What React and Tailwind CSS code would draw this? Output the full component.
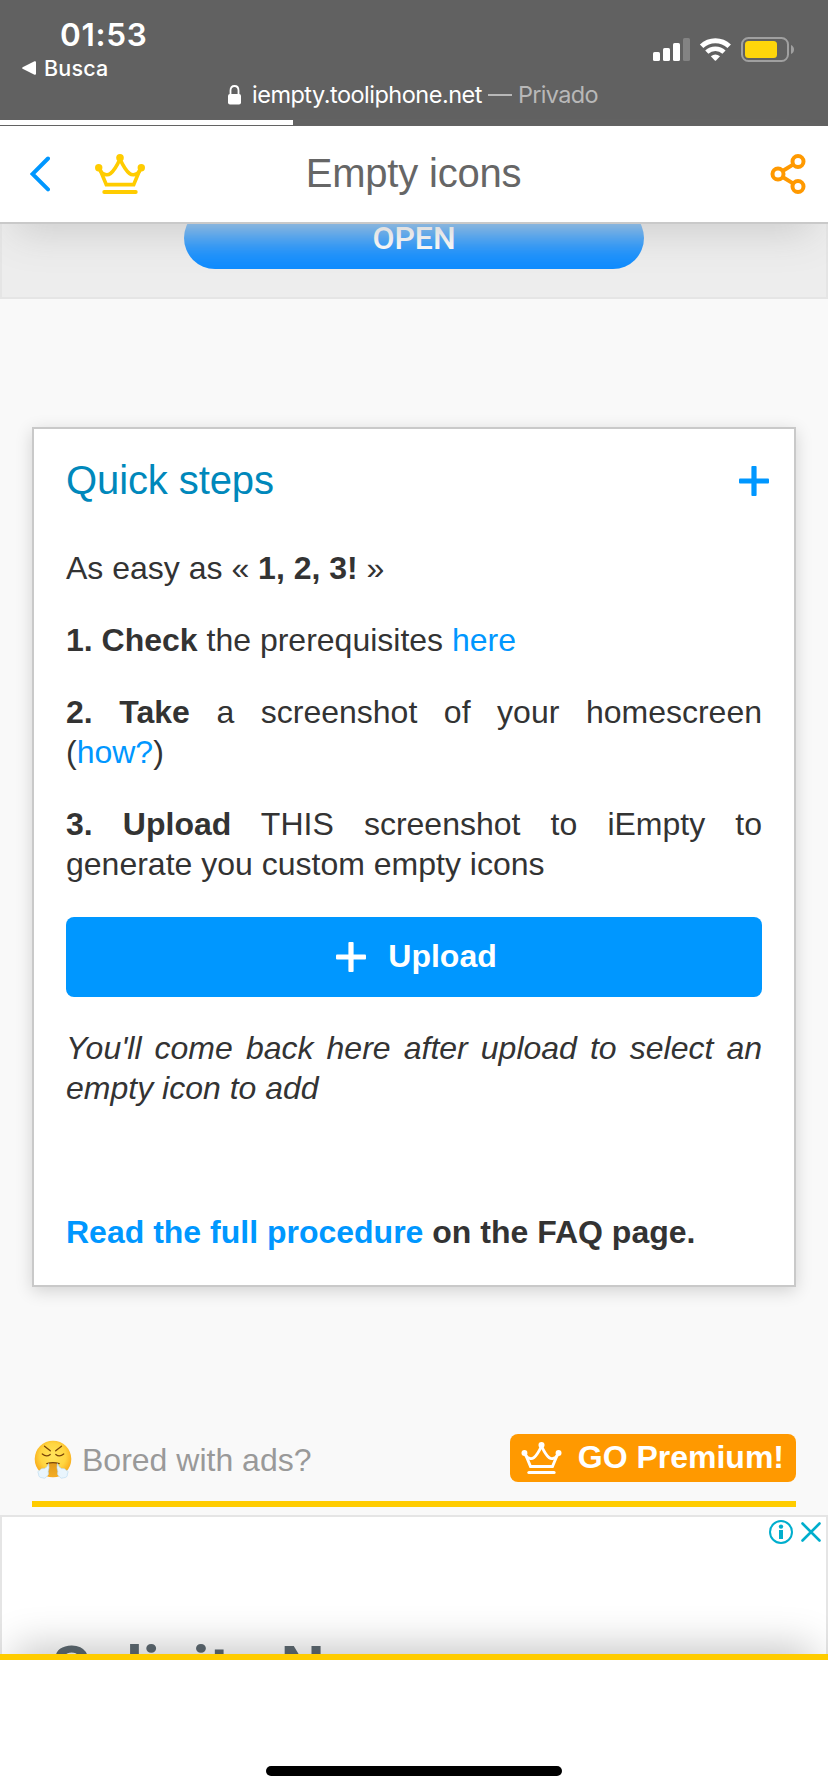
function Crown({ className }) {
  return (
    <svg className={className} viewBox="0 0 50 40" fill="none" stroke="currentColor" strokeWidth="3.6">
      <circle cx="3.7" cy="13.7" r="3.7" fill="currentColor" stroke="none" />
      <circle cx="25" cy="3.8" r="3.8" fill="currentColor" stroke="none" />
      <circle cx="46.3" cy="13.7" r="3.7" fill="currentColor" stroke="none" />
      <path d="M4.8 15 L11.3 30.6 H38.7 L45.2 15" />
      <path d="M5 16.5 C8 21 12.5 21.8 15.5 19.5 C19.3 16.5 22.3 11 25 5 C27.7 11 30.7 16.5 34.5 19.5 C37.5 21.8 42 21 45 16.5" />
      <path d="M9.2 38 H40.8" strokeLinecap="round" strokeWidth="3.8" />
    </svg>
  );
}

function Plus({ className }) {
  return (
    <svg className={className} viewBox="0 0 30 30" fill="currentColor">
      <rect x="0" y="12.4" width="30" height="5.2" rx="1" />
      <rect x="12.4" y="0" width="5.2" height="30" rx="1" />
    </svg>
  );
}

function HuffFace() {
  return (
    <svg className="h-[40px] w-[38px]" viewBox="0 0 38 40" fill="none">
      <defs>
        <radialGradient id="face" cx="50%" cy="42%" r="58%">
          <stop offset="0" stopColor="#ffe45c" />
          <stop offset="0.6" stopColor="#ffd540" />
          <stop offset="1" stopColor="#f8a414" />
        </radialGradient>
        <linearGradient id="mouth" x1="0" y1="0" x2="0" y2="1">
          <stop offset="0" stopColor="#e09a1c" />
          <stop offset="1" stopColor="#f4ac24" />
        </linearGradient>
      </defs>
      <circle cx="19" cy="19" r="18.3" fill="url(#face)" />
      <path d="M14.5 23 H23.5 L24.5 35.5 Q19 38 13.5 35.5 Z" fill="url(#mouth)" />
      <g stroke="#7a4508" strokeWidth="1.3" strokeLinecap="round">
        <path d="M10.5 6.2 Q13.5 8.5 16.3 10.8" />
        <path d="M27.5 6.2 Q24.5 8.5 21.7 10.8" />
        <path d="M8.3 14 Q12.5 17.6 16.2 14.4" />
        <path d="M29.7 14 Q25.5 17.6 21.8 14.4" />
        <path d="M12.8 23.6 Q19 21.6 25.2 23.6" />
      </g>
      <g fill="#e9f5fd" stroke="#b5d8f0" strokeWidth="0.6">
        <path d="M14.6 23.5 Q13.6 27 10.5 28.6 Q6.5 28 6 30.2 Q2.8 31 4.6 34 Q4.3 37.6 8.5 37.8 Q11 39.3 12.6 36.6 Q15.4 35 14.2 31.5 Q15.6 27.5 14.6 23.5 Z" />
        <path d="M23.4 23.5 Q24.4 27 27.5 28.6 Q31.5 28 32 30.2 Q35.2 31 33.4 34 Q33.7 37.6 29.5 37.8 Q27 39.3 25.4 36.6 Q22.6 35 23.8 31.5 Q22.4 27.5 23.4 23.5 Z" />
      </g>
    </svg>
  );
}

function StatusBar() {
  return (
    <div className="flex h-[126px] flex-col bg-[#616161] font-[Inter,sans-serif] text-white">
      <div className="flex h-[82px] justify-between">
        <div className="flex flex-col pt-[16px]">
          <span className="pl-[60px] text-[31.5px] leading-[38px] font-semibold tracking-[0.7px]">01:53</span>
          <span className="flex h-[28px] items-center gap-[8px] pl-[22px] text-[21.5px] leading-[28px] font-medium tracking-[0.2px]">
            <svg className="h-[14px] w-[14px]" viewBox="0 0 14 14" fill="white">
              <path d="M0.6 6.2 L12.5 0.3 Q14 0 14 1.2 V12.8 Q14 14 12.5 13.7 L0.6 7.8 Q-0.4 7 0.6 6.2 Z" />
            </svg>
            Busca
          </span>
        </div>
        <svg className="mt-[36px] mr-[32px] h-[28px] w-[144px]" viewBox="0 0 144 28" fill="none">
          <rect x="1" y="16" width="7" height="9" rx="1.6" fill="white" />
          <rect x="11" y="12" width="7" height="13" rx="1.6" fill="white" />
          <rect x="21" y="7" width="7" height="18" rx="1.6" fill="white" />
          <rect x="31" y="2" width="7" height="23" rx="1.6" fill="#838383" />
          <g stroke="white" strokeWidth="5">
            <path d="M49.6 10.3 A20 20 0 0 1 77.2 10.3" />
            <path d="M54.8 16.2 A12.4 12.4 0 0 1 72 16.2" strokeWidth="4.6" />
          </g>
          <path d="M58.8 20.3 Q63.4 16.5 68 20.3 L64 24.5 Q63.4 25 62.8 24.5 Z" fill="white" />
          <rect x="90" y="2" width="46" height="23" rx="6.5" stroke="#a0a0a0" strokeWidth="2" />
          <rect x="93" y="5" width="32" height="17" rx="3.5" fill="#ffd60a" />
          <path d="M139 9 Q142 10.5 142 13.5 Q142 16.5 139 18 Z" fill="#a0a0a0" />
        </svg>
      </div>
      <div className="-mt-[1px] flex h-[28px] items-center pl-[228px] text-[23.5px] leading-[28px]">
        <svg className="mr-[11px] h-[20px] w-[13px] shrink-0" viewBox="0 0 13 20" fill="none">
          <path d="M2.5 10 V5.5 Q2.5 1 6.5 1 Q10.5 1 10.5 5.5 V10" stroke="white" strokeWidth="1.8" />
          <rect x="0" y="9" width="13" height="10.5" rx="2" fill="white" />
        </svg>
        <span className="w-[236px] whitespace-nowrap tracking-[-0.5px]">iempty.tooliphone.net</span>
        <span className="h-[2px] w-[24px] bg-[#b8b8b8]" />
        <span className="ml-[6px] tracking-[-0.7px] text-[#b8b8b8]">Privado</span>
      </div>
      <div className="mt-[11px] h-[5px] w-[293px] bg-white" />
    </div>
  );
}

function NavBar() {
  return (
    <div className="flex h-[98px] items-center justify-between border-b-2 border-[#c9c9c9] bg-white pr-[22px] pl-[30px] shadow-[0_23px_40px_-15px_#ccc]">
      <div className="flex w-[130px] items-center gap-[45px]">
        <svg className="h-[36px] w-[20px]" viewBox="0 0 20 36" fill="none" stroke="#0097ff" strokeWidth="4" strokeLinecap="round">
          <path d="M18 2.5 L2.5 18 L18 33.3" />
        </svg>
        <Crown className="h-[40px] w-[50px] text-[#ffcc00]" />
      </div>
      <h1 className="-mt-[2px] pr-[9px] text-[40px] leading-[40px] tracking-[-0.2px] text-[#666]">Empty icons</h1>
      <div className="flex w-[130px] justify-end">
        <svg className="h-[40px] w-[36px]" viewBox="0 0 36 40" fill="none" stroke="#ff9900" strokeWidth="4">
          <circle cx="8" cy="20" r="5.5" />
          <circle cx="28" cy="7.5" r="5.5" />
          <circle cx="28" cy="32.5" r="5.5" />
          <path d="M12.6 17 L23.4 10.4 M12.6 23 L23.4 29.6" />
        </svg>
      </div>
    </div>
  );
}

function QuickSteps() {
  return (
    <section className="mx-[32px] mt-[128px] flex h-[860px] shrink-0 flex-col border-2 border-[#c9c9c9] bg-white px-[32px] text-[32px] leading-[40px] text-[#333] shadow-[0_4px_16px_rgba(0,0,0,0.16)]">
      <div className="mt-[27px] -mr-[7px] flex h-[48px] items-center justify-between">
        <h2 className="text-[40px] leading-[48px] tracking-[-0.1px] text-[#0088bb]">Quick steps</h2>
        <Plus className="mt-[2px] h-[30px] w-[30px] text-[#0097ff]" />
      </div>
      <div className="mt-[44px] flex flex-col gap-[32px] text-justify">
        <p>As easy as « <b>1, 2, 3!</b> »</p>
        <p><b>1. Check</b> the prerequisites <a className="text-[#0097ff]">here</a></p>
        <p><b>2. Take</b> a screenshot of your homescreen (<a className="text-[#0097ff]">how?</a>)</p>
        <p><b>3. Upload</b> THIS screenshot to iEmpty to generate you custom empty icons</p>
      </div>
      <button className="mt-[33px] flex h-[80px] shrink-0 items-center justify-center gap-[22px] rounded-[8px] bg-[#0097ff] pl-[5px] font-bold text-white">
        <Plus className="h-[30px] w-[30px]" />
        <span className="-mt-[3px]">Upload</span>
      </button>
      <p className="mt-[31px] text-justify italic">You'll come back here after upload to select an empty icon to add</p>
      <p className="mt-[104px] font-bold"><a className="text-[#0097ff]">Read the full procedure</a> on the FAQ page.</p>
    </section>
  );
}

export default function App() {
  return (
    <div className="flex h-[1792px] w-[828px] flex-col overflow-hidden bg-[#f9f9f9] font-['Liberation_Sans',Arial,sans-serif]">
      <header className="relative z-10">
        <StatusBar />
        <NavBar />
      </header>
      <main className="flex h-[1430px] flex-col overflow-hidden">
        <div className="flex h-[75px] shrink-0 items-end justify-center border-x-2 border-b-2 border-[#e5e5e5] bg-[#ededed] pb-[28px]">
          <div className="flex h-[62px] w-[460px] shrink-0 items-center justify-center rounded-full bg-[#0a8aff] font-[Roboto,sans-serif] text-[32px] font-medium text-white">OPEN</div>
        </div>
        <QuickSteps />
        <div className="mx-[32px] mt-[147px] flex h-[73px] shrink-0 items-start justify-between border-b-[6px] border-[#ffcc00]">
          <div className="mt-[6px] flex h-[40px] items-center gap-[10px] pl-[2px] text-[32px] leading-[40px] text-[#999]">
            <HuffFace />
            <span>Bored with ads?</span>
          </div>
          <button className="flex h-[48px] items-center gap-[16px] rounded-[8px] bg-[#ff9900] pr-[12px] pl-[11px] text-[32px] leading-[40px] font-bold whitespace-nowrap text-white">
            <Crown className="h-[32px] w-[41px]" />
            <span className="-mt-[3px]">GO Premium!</span>
          </button>
        </div>
        <div className="mt-[8px] flex h-[400px] shrink-0 flex-col border-2 border-[#e5e5e5] bg-white">
          <div className="flex h-[30px] items-center justify-end gap-[8px] pr-[5px]">
            <svg className="h-[24px] w-[24px]" viewBox="0 0 24 24" fill="none">
              <circle cx="12" cy="12" r="11" stroke="#00aecd" strokeWidth="2" />
              <circle cx="12" cy="6.6" r="2.2" fill="#00aecd" />
              <rect x="10" y="10" width="4" height="9" fill="#00aecd" />
            </svg>
            <svg className="h-[20px] w-[20px]" viewBox="0 0 20 20" stroke="#00aecd" strokeWidth="2.6" strokeLinecap="round">
              <path d="M1.5 1.5 L18.5 18.5 M18.5 1.5 L1.5 18.5" />
            </svg>
          </div>
          <p className="mt-[86px] pl-[50px] font-[Roboto,sans-serif] text-[62px] leading-[72px] font-bold tracking-[0.5px] text-[#5f6b73]">Solicita N</p>
        </div>
      </main>
      <footer className="relative z-10 flex h-[138px] shrink-0 flex-col items-center justify-end border-t-[6px] border-[#ffcc00] bg-white pb-[16px] shadow-[0_-22px_40px_-15px_rgba(0,0,0,0.23)]">
        <div className="h-[10px] w-[296px] rounded-full bg-black" />
      </footer>
    </div>
  );
}
